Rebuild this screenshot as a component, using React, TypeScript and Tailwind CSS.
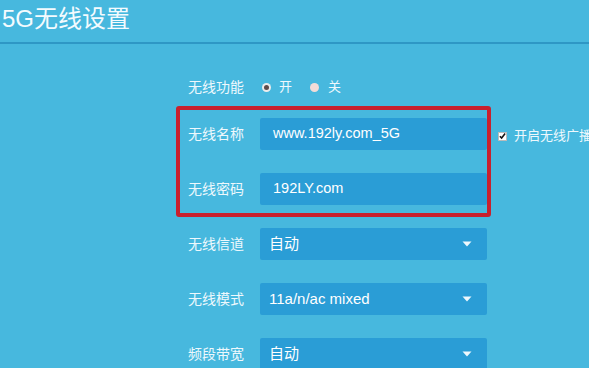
import React from "react";

const FONT = { fontFamily: '"Liberation Sans", "Noto Sans CJK SC", sans-serif' };

function Caret() {
  return (
    <svg width="10" height="6" viewBox="0 0 10 6" className="shrink-0">
      <path d="M0.5 0.5 L9.5 0.5 L5 5.5 Z" fill="#eef8fd" />
    </svg>
  );
}

function Field({ value }: { value: string }) {
  return (
    <div className="w-[227px] h-[32px] rounded-[2px] bg-[#2a9dd6] flex items-center pl-[13px] text-[14.5px] text-white">
      {value}
    </div>
  );
}

function Select({ value }: { value: string }) {
  return (
    <div className="w-[227px] h-[32px] rounded-[2px] bg-[#2a9dd6] flex items-center justify-between pl-[9px] pr-[15px] text-[15px] text-white">
      <span>{value}</span>
      <Caret />
    </div>
  );
}

export default function App() {
  return (
    <div className="w-[589px] h-[368px] bg-[#47b8de] overflow-hidden" style={FONT}>
      <div className="h-[44px] border-b-2 border-[#2e97c5] pl-[2px] pt-[3px] text-[24px] leading-[32px] text-[#f4fbfe] whitespace-nowrap">
        5G无线设置
      </div>
      <div className="ml-[176px] flex flex-col">
        <div className="mt-[27px] h-[32px] flex items-center text-[14px] text-[#eef8fd]">
          <div className="w-[84px] pl-[12px]">无线功能</div>
          <div className="flex items-center">
            <span className="ml-[2px] w-[9px] h-[9px] rounded-full bg-[#ececec] flex items-center justify-center">
              <span className="w-[5px] h-[5px] rounded-full bg-[#5e4c4c]" />
            </span>
            <span className="ml-[8px] text-[13px]">开</span>
            <span className="ml-[18px] w-[9px] h-[9px] rounded-full bg-[#f2dcd8]" />
            <span className="ml-[9px] text-[13px]">关</span>
          </div>
        </div>
        <div className="mt-[3px] flex items-start">
          <div className="w-[318px] border-4 border-[#c8202e] rounded-[3px] pt-[8px] pb-[8px] flex flex-col gap-[23px]">
            <div className="flex items-center text-[14px] text-[#eef8fd]">
              <div className="w-[80px] pl-[8px]">无线名称</div>
              <Field value="www.192ly.com_5G" />
            </div>
            <div className="flex items-center text-[14px] text-[#eef8fd]">
              <div className="w-[80px] pl-[8px]">无线密码</div>
              <Field value="192LY.com" />
            </div>
          </div>
          <div className="ml-[7px] mt-[14px] h-[32px] flex items-center whitespace-nowrap text-[13px] text-[#eef8fd]">
            <span className="w-[9px] h-[9px] bg-white border border-[#bbb] flex items-center justify-center">
              <svg width="8" height="8" viewBox="0 0 8 8">
                <path d="M1 4.2 L3 6.3 L7 1.2" stroke="#111" strokeWidth="1.8" fill="none" />
              </svg>
            </span>
            <span className="ml-[7px]">开启无线广播</span>
          </div>
        </div>
        <div className="mt-[11px] flex flex-col gap-[23px]">
          <div className="flex items-center text-[14px] text-[#eef8fd]">
            <div className="w-[84px] pl-[12px]">无线信道</div>
            <Select value="自动" />
          </div>
          <div className="flex items-center text-[14px] text-[#eef8fd]">
            <div className="w-[84px] pl-[12px]">无线模式</div>
            <Select value="11a/n/ac mixed" />
          </div>
          <div className="flex items-center text-[14px] text-[#eef8fd]">
            <div className="w-[84px] pl-[12px]">频段带宽</div>
            <Select value="自动" />
          </div>
        </div>
      </div>
    </div>
  );
}
